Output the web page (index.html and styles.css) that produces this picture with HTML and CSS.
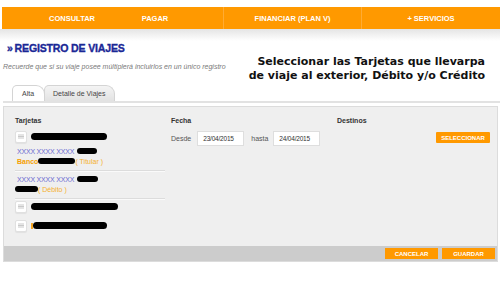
FILE: index.html
```html
<!DOCTYPE html>
<html lang="es">
<head>
<meta charset="utf-8">
<link rel="stylesheet" href="styles.css">
</head>
<body>
<nav class="topnav">
  <a class="nav-item n1">CONSULTAR</a>
  <a class="nav-item n2">PAGAR</a>
  <span class="nav-gap"></span>
  <a class="nav-item n3">FINANCIAR (PLAN V)</a>
  <a class="nav-item n4">+ SERVICIOS</a>
</nav>
<div class="shade"></div>
<header class="intro">
  <div class="intro-left">
    <h1 class="title"><span class="raquo">»</span>REGISTRO DE VIAJES</h1>
    <p class="note">Recuerde que si su viaje posee múltiplerá incluirlos en un único registro</p>
  </div>
  <p class="callout">Seleccionar las Tarjetas que llevarpa<br>de viaje al exterior, Débito y/o Crédito</p>
</header>
<div class="tabs">
  <span class="tab active">Alta</span>
  <span class="tab">Detalle de Viajes</span>
</div>
<section class="panel">
  <div class="cols">
    <div class="col col-cards">
      <h2 class="col-head">Tarjetas</h2>
      <div class="card-row">
        <span class="chk"><svg width="6" height="5" viewBox="0 0 6 5"><path d="M0 1h6M0 2.5h6M0 4h6" stroke="#bbb" stroke-width="0.8"/></svg></span>
        <span class="blob" style="width:76px"></span>
      </div>
      <div class="card-info">
        <div class="line"><span class="xnum">XXXX XXXX XXXX</span><span class="blob sm" style="width:20px"></span></div>
        <div class="line"><span class="bank">Banco</span><span class="blob sm" style="width:37px"></span><span class="kind">( Titular )</span></div>
      </div>
      <div class="card-info">
        <div class="line"><span class="xnum">XXXX XXXX XXXX</span><span class="blob sm" style="width:21px"></span></div>
        <div class="line"><span class="blob sm first" style="width:23px"></span><span class="kind">( Débito )</span></div>
      </div>
      <div class="card-row r3">
        <span class="chk"><svg width="6" height="5" viewBox="0 0 6 5"><path d="M0 1h6M0 2.5h6M0 4h6" stroke="#bbb" stroke-width="0.8"/></svg></span>
        <span class="blob" style="width:87px"></span>
      </div>
      <div class="card-row r4">
        <span class="chk"><svg width="6" height="5" viewBox="0 0 6 5"><path d="M0 1h6M0 2.5h6M0 4h6" stroke="#bbb" stroke-width="0.8"/></svg></span>
        <span class="mark"></span><span class="blob" style="width:74px"></span>
      </div>
    </div>
    <div class="col col-date">
      <h2 class="col-head">Fecha</h2>
      <div class="date-row">
        <span class="lbl">Desde</span>
        <span class="field">23/04/2015</span>
        <span class="lbl l2">hasta</span>
        <span class="field">24/04/2015</span>
      </div>
    </div>
    <div class="col col-dest">
      <h2 class="col-head">Destinos</h2>
      <div class="dest-row"><button class="btn sel">SELECCIONAR</button></div>
    </div>
  </div>
  <div class="footer">
    <button class="btn foot">CANCELAR</button>
    <button class="btn foot">GUARDAR</button>
  </div>
</section>
</body>
</html>
```
FILE: styles.css
```css
* { box-sizing: border-box; }
html, body { margin: 0; padding: 0; background: #fff; }
body { font-family: "Liberation Sans", Arial, sans-serif; color: #333; width: 500px; overflow: hidden; }

.topnav {
  margin: 7px 0 0 2px;
  height: 22px;
  background: #ff9900;
  display: grid;
  grid-template-columns: 140px 26px 55px 138px 1fr;
  align-items: stretch;
}
.nav-item {
  color: #fff;
  font-weight: bold;
  font-size: 7.5px;
  display: flex;
  align-items: center;
  justify-content: center;
  white-space: nowrap;
}
.n3, .n4 { border-left: 1px solid #ffab33; }
.shade { height: 12px; background: linear-gradient(#e4e4e4, #fff); }

.intro { display: flex; justify-content: space-between; padding: 0 15px 0 3px; }
.intro-left { width: 245px; }
.title {
  margin: 0 0 0 4px;
  font-size: 11.5px;
  line-height: 14px;
  color: #1a2896;
  font-weight: bold;
  letter-spacing: -0.2px;
  font-family: "Liberation Sans", sans-serif;
  -webkit-text-stroke: 0.35px #1a2896;
  transform: scaleX(0.92);
  transform-origin: left;
}
.raquo { margin-right: 2px; }
.note {
  margin: 8px 0 0;
  font-size: 7px;
  font-style: italic;
  color: #7a7a7a;
  white-space: nowrap;
}
.callout {
  margin: 14px 0 0;
  text-align: right;
  font-family: "DejaVu Sans", sans-serif;
  font-weight: bold;
  font-size: 11px;
  line-height: 14px;
  color: #111;
  white-space: nowrap;
}

.tabs {
  margin: 3px 0 0 3px;
  padding-left: 9px;
  height: 17px;
  display: flex;
  align-items: flex-end;
  border-bottom: 2px solid #e2e2e2;
}
.tab {
  font-size: 7px;
  color: #444;
  height: 16px;
  line-height: 15px;
  padding: 0 9px 0 8px;
  border: 1px solid #d4d4d4;
  border-bottom: none;
  border-radius: 5px 9px 0 0;
  background: linear-gradient(#f4f4f4, #e2e2e2);
  margin-right: -1px;
}
.tab.active { background: #fff; padding: 0 10px 0 9px; }

.panel {
  margin: 3px 2px 0 3px;
  height: 156px;
  background: #efefef;
  border: 1px solid #dcdcdc;
  display: flex;
  flex-direction: column;
}
.cols { flex: 1; display: flex; padding: 0 0 0 11px; }
.col-head { margin: 9px 0 0; font-size: 7px; font-weight: bold; color: #333; line-height: 9px; }
.col-cards { width: 156px; }
.card-list-w { width: 150px; }
.col-date { width: 166px; }
.col-dest { flex: 1; }

.card-row { display: flex; align-items: center; margin-top: 5px; height: 13px; }
.card-row.r3 { margin-top: 1px; }
.card-row.r4 { margin-top: 6px; }
.chk {
  width: 12px; height: 12px;
  background: #fff;
  border: 1px solid #e0e0e0;
  border-radius: 2px;
  display: flex; align-items: center; justify-content: center;
  margin-right: 4px;
  box-shadow: 0 1px 1px rgba(0,0,0,0.06);
}
.blob { display: inline-block; height: 7px; background: #000; border-radius: 4px; }
.blob.sm { height: 6px; border-radius: 3px; }
.mark { width: 2px; height: 6px; background: #f5a623; margin-right: 0; }

.card-info { width: 150px; padding: 3px 0 4px 2px; border-bottom: 1px solid #dcdcdc; box-shadow: 0 1px 0 #fafafa; }
.card-info .line { display: flex; align-items: center; height: 10px; font-size: 7px; }
.card-info .blob.first { margin-left: -2px; }
.xnum { color: #6a6acf; letter-spacing: -0.2px; margin-right: 3px; }
.bank { color: #f5a000; font-weight: bold; }
.kind { color: #f5b030; }

.date-row { display: flex; align-items: center; margin-top: 6px; }
.lbl { font-size: 7px; color: #555; margin-right: 6px; }
.lbl.l2 { margin-left: 7px; margin-right: 5px; }
.field {
  width: 47px; height: 15px;
  background: #fff;
  border: 1px solid #dedede;
  font-size: 6.5px;
  color: #333;
  line-height: 13px;
  padding-left: 5px;
  letter-spacing: -0.2px;
}
.dest-row { display: flex; justify-content: flex-end; margin-top: 7px; padding-right: 7px; }

.btn {
  border: none;
  background: #ff9900;
  color: #fff;
  font-family: "Liberation Sans", Arial, sans-serif;
  font-weight: bold;
  font-size: 6px;
  padding: 0;
  cursor: pointer;
}
.btn.sel { width: 54px; height: 11px; border-radius: 1px; }
.footer {
  height: 15px;
  background: #cccccc;
  display: flex;
  justify-content: flex-end;
  align-items: center;
  gap: 4px;
  padding-right: 2px;
}
.btn.foot { width: 53px; height: 11px; }
```
